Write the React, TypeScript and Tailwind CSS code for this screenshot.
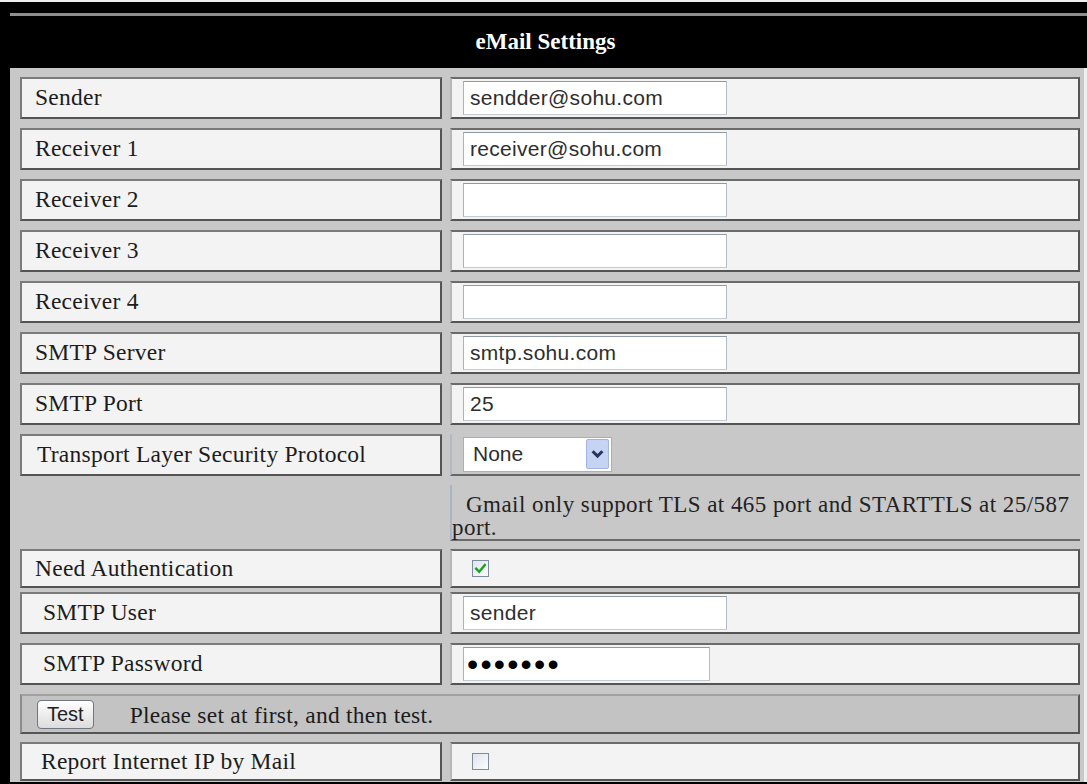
import React from "react";

const serif = { fontFamily: '"Liberation Serif", "Times New Roman", serif' };
const sans = { fontFamily: '"Liberation Sans", Arial, sans-serif' };

function Label({ children, indent = 0 }: { children: React.ReactNode; indent?: number }) {
  const pad = indent === 8 ? "pl-[21px]" : indent === 6 ? "pl-[19px]" : indent === 2 ? "pl-[15px]" : "pl-[13px]";
  return (
    <div
      className={`h-full flex items-center bg-[#f3f3f3] border-2 border-t-[#7b7b7b] border-l-[#7b7b7b] border-b-[#545454] border-r-[#545454] ${pad} text-[23.5px] tracking-[0.25px] text-[#1c1c1c] whitespace-nowrap`}
      style={serif}
    >
      {children}
    </div>
  );
}

function Value({ children }: { children?: React.ReactNode }) {
  return (
    <div className="h-full flex items-center bg-[#f3f3f3] border-2 border-t-[#6b6b6b] border-l-[#b8b8b8] border-b-[#545454] border-r-[#545454] pl-[11px]">
      {children}
    </div>
  );
}

function TextBox({ value = "", w = "w-[264px]" }: { value?: string; w?: string }) {
  return (
    <input
      readOnly
      value={value}
      className={`${w} h-[34px] bg-white border border-t-[#8f9aa6] border-l-[#a9b3bd] border-b-[#c3cad2] border-r-[#b3bcc6] pl-[6px] text-[21px] tracking-[0.3px] text-[#2e2e2e] outline-none`}
      style={sans}
    />
  );
}

function Check({ checked }: { checked: boolean }) {
  return (
    <div className="w-[17px] h-[17px] border border-[#7d8c9c] bg-gradient-to-br from-[#dfe5ec] to-[#fbfcfd] flex items-center justify-center ml-[9px]">
      {checked && (
        <svg width="13" height="13" viewBox="0 0 12 12">
          <path d="M2 6.2 L4.8 9 L10 2.8" fill="none" stroke="#23a023" strokeWidth="2.2" strokeLinecap="square" />
        </svg>
      )}
    </div>
  );
}

function Row({ h, mt, children }: { h: string; mt: string; children: React.ReactNode }) {
  return <div className={`grid grid-cols-[422px_630px] gap-x-[8px] ${h} ${mt}`}>{children}</div>;
}

export default function App() {
  return (
    <div className="w-[1087px] h-[784px] bg-[#eeeeee] pt-[2px] overflow-hidden">
      <div className="bg-black pt-[11px] pl-[10px] pb-[2px]">
        <div className="border-t-[3px] border-[#8e8e8e]">
          <div
            className="h-[52px] bg-black flex items-center justify-center pr-[6px] text-white font-bold text-[23px]"
            style={serif}
          >
            eMail Settings
          </div>
          <div className="flex">
            <div className="w-[1074px] bg-[#c8c8c8] pl-[10px] pr-[4px] pt-[9px] pb-[2px] flex flex-col">
              <Row h="h-[42px]" mt="mt-0">
                <Label>Sender</Label>
                <Value>
                  <TextBox value="sendder@sohu.com" />
                </Value>
              </Row>
              <Row h="h-[42px]" mt="mt-[9px]">
                <Label>Receiver 1</Label>
                <Value>
                  <TextBox value="receiver@sohu.com" />
                </Value>
              </Row>
              <Row h="h-[42px]" mt="mt-[9px]">
                <Label>Receiver 2</Label>
                <Value>
                  <TextBox />
                </Value>
              </Row>
              <Row h="h-[42px]" mt="mt-[9px]">
                <Label>Receiver 3</Label>
                <Value>
                  <TextBox />
                </Value>
              </Row>
              <Row h="h-[42px]" mt="mt-[9px]">
                <Label>Receiver 4</Label>
                <Value>
                  <TextBox />
                </Value>
              </Row>
              <Row h="h-[42px]" mt="mt-[9px]">
                <Label>SMTP Server</Label>
                <Value>
                  <TextBox value="smtp.sohu.com" />
                </Value>
              </Row>
              <Row h="h-[42px]" mt="mt-[9px]">
                <Label>SMTP Port</Label>
                <Value>
                  <TextBox value="25" />
                </Value>
              </Row>
              <Row h="h-[42px]" mt="mt-[9px]">
                <Label indent={2}>Transport Layer Security Protocol</Label>
                <div className="h-full flex items-center border-l-2 border-l-[#b4b8bf] border-b-2 border-b-[#666666] pl-[11px]">
                  <div className="w-[149px] h-[35px] bg-white border border-[#a7b0ba] flex items-center justify-between pr-[2px]">
                    <span className="pl-[9px] text-[21px] text-[#2e2e2e]" style={sans}>
                      None
                    </span>
                    <div className="w-[23px] h-[30px] bg-[#c6d4f3] border border-[#a3b5df] rounded-[2px] flex items-center justify-center">
                      <svg width="13" height="10" viewBox="0 0 12 9">
                        <path d="M1.5 2 L6 6.5 L10.5 2" fill="none" stroke="#25355f" strokeWidth="2.8" />
                      </svg>
                    </div>
                  </div>
                </div>
              </Row>
              <Row h="h-[55px]" mt="mt-[9px]">
                <div />
                <div
                  className="h-full border-l-2 border-l-[#a9b5c6] border-b-2 border-b-[#6b6b6b] pt-[8px] text-[23px] leading-[23px] tracking-[0.45px] text-[#222] indent-[14px]"
                  style={serif}
                >
                  Gmail only support TLS at 465 port and STARTTLS at 25/587 port.
                </div>
              </Row>
              <Row h="h-[36px]" mt="mt-[9px]">
                <Label>Need Authentication</Label>
                <Value>
                  <Check checked />
                </Value>
              </Row>
              <Row h="h-[42px]" mt="mt-[7px]">
                <Label indent={8}>SMTP User</Label>
                <Value>
                  <TextBox value="sender" />
                </Value>
              </Row>
              <Row h="h-[42px]" mt="mt-[9px]">
                <Label indent={8}>SMTP Password</Label>
                <Value>
                  <input
                    readOnly
                    type="password"
                    value="1234567"
                    className="w-[247px] h-[34px] bg-white border border-t-[#8f9aa6] border-l-[#a9b3bd] border-b-[#c3cad2] border-r-[#b3bcc6] pl-[3px] text-[32px] tracking-[2.2px] text-black outline-none"
                    style={sans}
                  />
                </Value>
              </Row>
              <div className="mt-[9px] h-[40px] flex items-center border-2 border-t-[#a0a0a0] border-l-[#8c8c8c] border-b-[#555] border-r-[#555] bg-[#c3c3c3] pl-[15px]">
                <div
                  className="h-[29px] px-[9px] flex items-center rounded-[4px] border border-[#6f7780] bg-gradient-to-b from-white to-[#dcdcdc] text-[20px] text-[#222]"
                  style={sans}
                >
                  Test
                </div>
                <span className="ml-[36px] text-[23.5px] tracking-[0.25px] text-[#1c1c1c] pt-[3px]" style={serif}>
                  Please set at first, and then test.
                </span>
              </div>
              <Row h="h-[38px]" mt="mt-[8px]">
                <Label indent={6}>Report Internet IP by Mail</Label>
                <Value>
                  <Check checked={false} />
                </Value>
              </Row>
            </div>
            <div className="w-[3px] bg-[#eeeeee]" />
          </div>
        </div>
      </div>
    </div>
  );
}
